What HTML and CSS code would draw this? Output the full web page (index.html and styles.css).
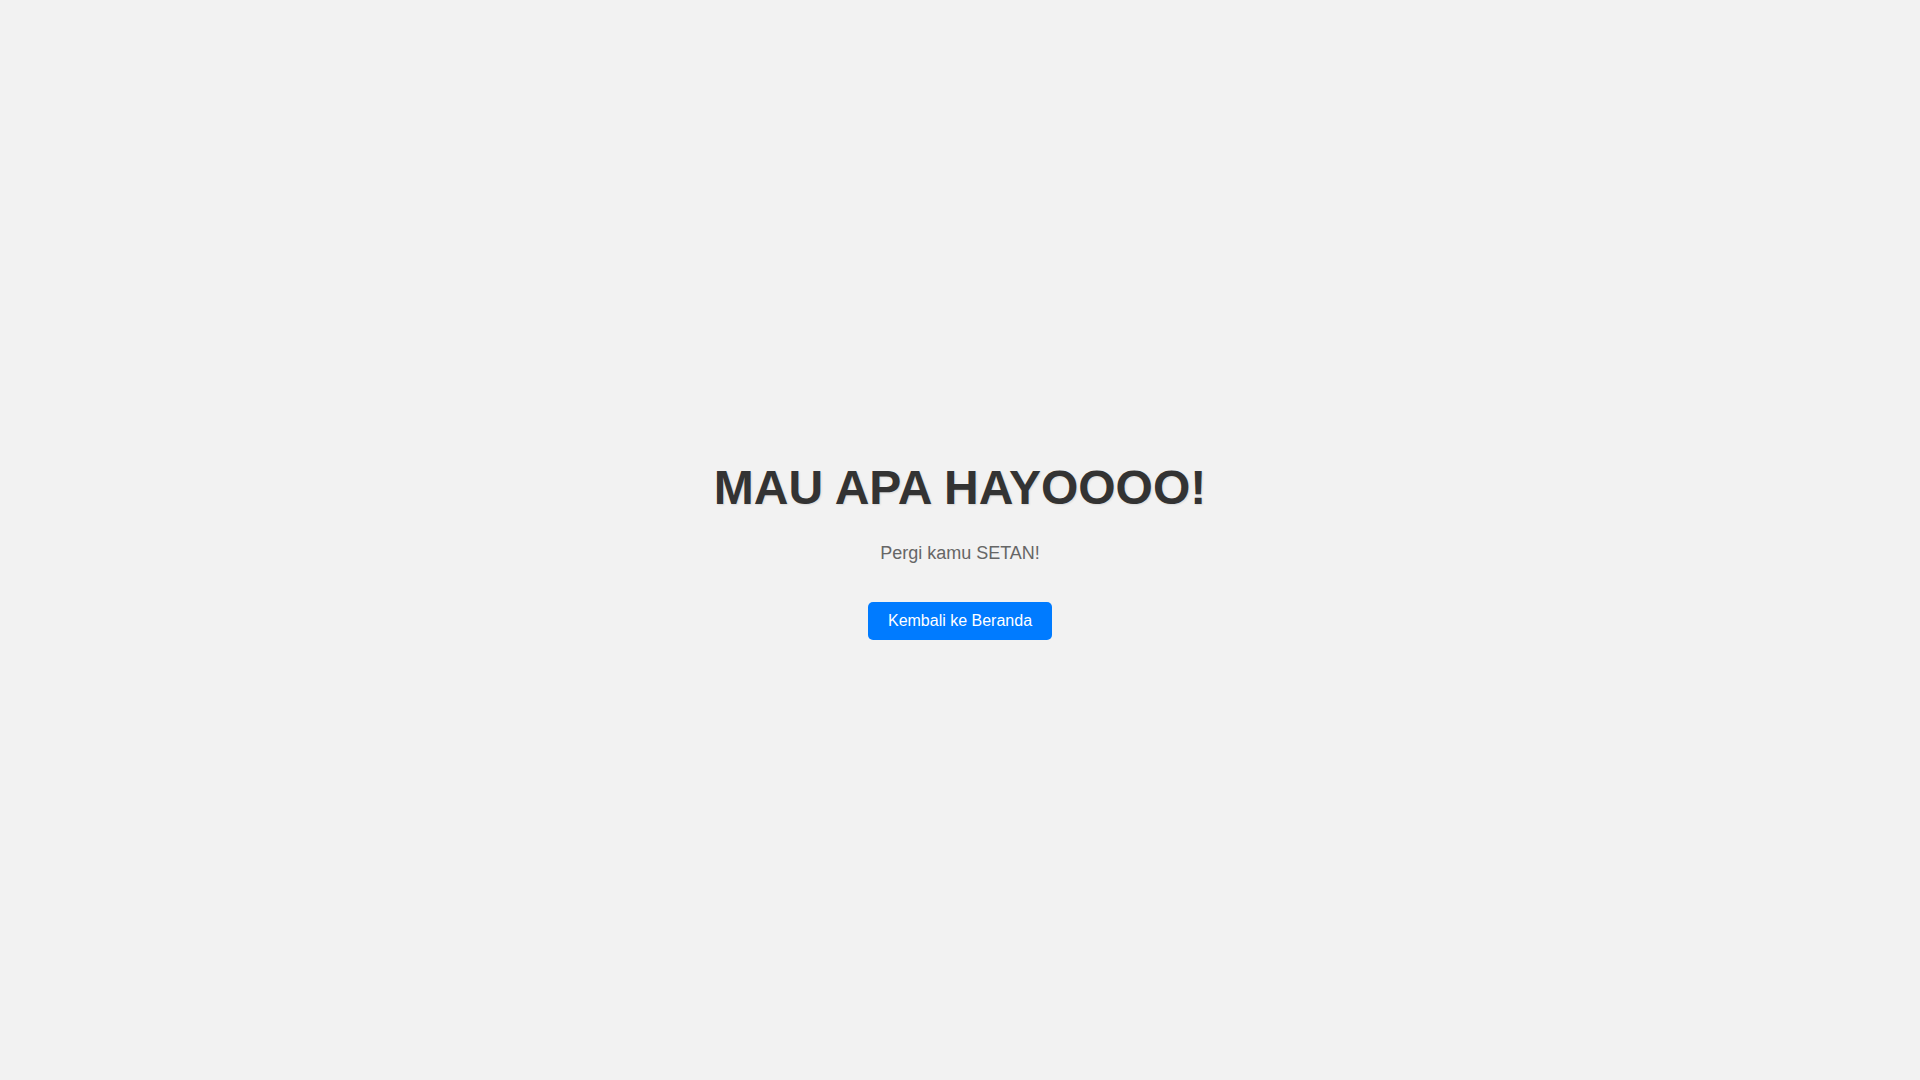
FILE: index.html
```html
<!DOCTYPE html>
<html lang="id">
<head>
<meta charset="utf-8">
<title>MAU APA HAYOOOO!</title>
<link rel="stylesheet" href="styles.css">
</head>
<body>
<main class="container">
  <h1 class="title">MAU APA HAYOOOO!</h1>
  <p class="subtitle">Pergi kamu SETAN!</p>
  <a class="btn" href="#">Kembali ke Beranda</a>
</main>
</body>
</html>
```
FILE: styles.css
```css
html, body {
  margin: 0;
  padding: 0;
  height: 100%;
}
body {
  background: #f2f2f2;
  font-family: "Liberation Sans", Arial, sans-serif;
  display: flex;
  align-items: center;
  justify-content: center;
  min-height: 100vh;
}
.container {
  text-align: center;
}
.title {
  font-size: 48px;
  font-weight: bold;
  color: #333;
  margin: 20px 0 28px;
  text-shadow: 1px 1px 2px rgba(0, 0, 0, 0.1);
}
.subtitle {
  font-size: 18px;
  color: #666;
  margin: 0 0 38px;
}
.btn {
  display: inline-block;
  padding: 10px 20px;
  background: #007bff;
  color: #fff;
  font-size: 16px;
  text-decoration: none;
  border-radius: 5px;
}
```
